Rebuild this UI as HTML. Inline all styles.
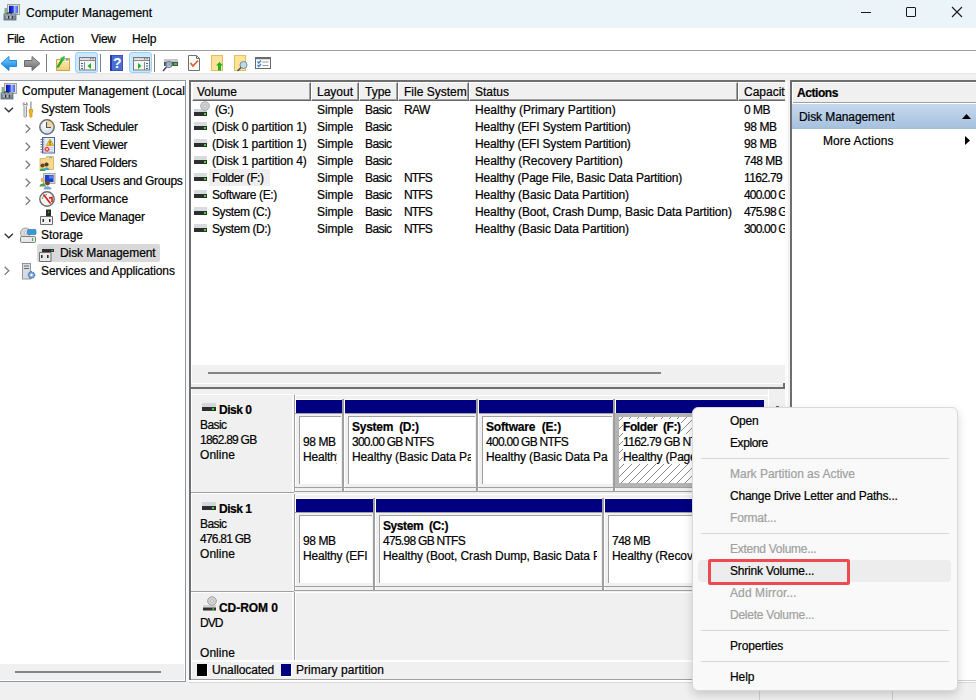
<!DOCTYPE html>
<html><head><meta charset="utf-8"><style>
*{box-sizing:border-box;margin:0;padding:0}
html,body{width:976px;height:700px;overflow:hidden;background:#f0f0f0;font-family:"Liberation Sans",sans-serif;font-size:12px;color:#000;position:relative}
.a{position:absolute}
.t{position:absolute;white-space:nowrap;line-height:14px;-webkit-text-stroke:0.2px currentColor}
.b{font-weight:bold}
svg{position:absolute;overflow:visible}
</style></head><body>
<div class="a" style="left:0px;top:0px;width:976px;height:28px;background:#ebf4f8"></div>
<div class="t" style="left:26px;top:6px;">Computer Management</div>
<svg style="left:3px;top:3px" width="18" height="18" viewBox="0 0 18 18">
<defs><linearGradient id="scr" x1="0" y1="0" x2="1" y2="0"><stop offset="0" stop-color="#0010c0"/><stop offset="0.45" stop-color="#2040e0"/><stop offset="0.6" stop-color="#a0b8ff"/><stop offset="1" stop-color="#4060f0"/></linearGradient></defs>
<rect x="4.5" y="1.5" width="12" height="10" fill="#e4e0d0" stroke="#a8a490" stroke-width="1"/>
<rect x="6" y="2.8" width="9" height="7.4" fill="url(#scr)"/>
<rect x="1.5" y="5" width="2.5" height="6" fill="#9aa0a8"/><rect x="1.8" y="7.8" width="2" height="1.6" fill="#40e040"/>
<path d="M4 10.5Q6 9 9 10.5" stroke="#202020" stroke-width="1.2" fill="none"/>
<rect x="1" y="11" width="12" height="6" fill="#7a8a98" stroke="#5a6670" stroke-width="0.8"/>
<rect x="1.5" y="11.5" width="11" height="1" fill="#a8b8c4"/>
<rect x="4.8" y="12.8" width="1.2" height="2.8" fill="#2a2a2a"/><rect x="8.6" y="12.8" width="1.2" height="2.8" fill="#2a2a2a"/>
<rect x="3.6" y="13.2" width="1" height="2" fill="#e8e8e8"/><rect x="7.4" y="13.2" width="1" height="2" fill="#e8e8e8"/>
</svg>
<div class="a" style="left:861px;top:12px;width:10px;height:1px;background:#1a1a1a"></div>
<div class="a" style="left:906px;top:7px;width:10px;height:10px;border:1px solid #1a1a1a;border-radius:1px"></div>
<svg style="left:951px;top:6px" width="12" height="12" viewBox="0 0 12 12"><path d="M1 1L11 11M11 1L1 11" stroke="#1a1a1a" stroke-width="1.1"/></svg>
<div class="a" style="left:0px;top:28px;width:976px;height:22px;background:#fff"></div>
<div class="t" style="left:7px;top:32px;letter-spacing:-0.436px;">File</div>
<div class="t" style="left:40px;top:32px;letter-spacing:0.157px;">Action</div>
<div class="t" style="left:91px;top:32px;letter-spacing:-0.274px;">View</div>
<div class="t" style="left:132px;top:32px;letter-spacing:-0.072px;">Help</div>
<div class="a" style="left:0px;top:50px;width:976px;height:1px;background:#a0a0a0"></div>
<div class="a" style="left:0px;top:51px;width:976px;height:22px;background:#fff"></div>
<div class="a" style="left:0px;top:73px;width:976px;height:1px;background:#e5e5e5"></div>
<svg style="left:0px;top:55px" width="18" height="17" viewBox="0 0 18 17">
<defs><linearGradient id="gb" x1="0" y1="0" x2="0" y2="1"><stop offset="0" stop-color="#7fd0ff"/><stop offset="1" stop-color="#0a78d8"/></linearGradient>
<linearGradient id="gg" x1="0" y1="0" x2="0" y2="1"><stop offset="0" stop-color="#b8b8b8"/><stop offset="1" stop-color="#6a6a6a"/></linearGradient></defs>
<path d="M1 8.5L9 1.5V5.5H16.5V11.5H9V15.5Z" fill="url(#gb)" stroke="#1a8ee8" stroke-width="1"/>
</svg>
<svg style="left:23px;top:55px" width="18" height="17" viewBox="0 0 18 17">
<path d="M17 8.5L9 1.5V5.5H1.5V11.5H9V15.5Z" fill="url(#gg)" stroke="#6a6a6a" stroke-width="1"/>
</svg>
<div class="a" style="left:46px;top:54px;width:1px;height:18px;background:#808080"></div>
<svg style="left:55px;top:55px" width="17" height="17" viewBox="0 0 17 17">
<defs><linearGradient id="fy" x1="0" y1="0" x2="0" y2="1"><stop offset="0" stop-color="#fdebb4"/><stop offset="1" stop-color="#f2cf78"/></linearGradient></defs>
<path d="M1.5 4.5H8L9 3.5H14.5V15.5H1.5Z" fill="url(#fy)" stroke="#c9a24c" stroke-width="1"/>
<path d="M2 6.5H14" stroke="#fff6d8" stroke-width="1"/>
<rect x="11" y="4" width="2.5" height="1.5" fill="#5aa0e8"/>
<path d="M3 11.5C4.5 9.5 5.5 7 7.5 4.5" stroke="#2aa82a" stroke-width="2.4" fill="none" stroke-linecap="round"/>
<path d="M5 3.2L9.8 0.8L9.2 6.2Z" fill="#3cc03c"/>
</svg>
<div class="a" style="left:75px;top:52px;width:23px;height:21px;background:#cce8ff;border:1px solid #99d1ff;border-radius:3px"></div>
<svg style="left:79px;top:57px" width="17" height="14" viewBox="0 0 17 14">
<rect x="0.5" y="0.5" width="16" height="12.5" fill="#f4f4f4" stroke="#7a7a7a" stroke-width="1"/>
<rect x="1" y="1" width="15" height="1.6" fill="#d8d8d8"/>
<rect x="11" y="1.3" width="1.2" height="1" fill="#505050"/><rect x="13.4" y="1.3" width="1.2" height="1" fill="#505050"/>
<rect x="1" y="3" width="15" height="1" fill="#8a8a8a"/><rect x="5" y="5" width="1" height="8" fill="#8a8a8a"/>
<rect x="2" y="6" width="2" height="1" fill="#3060b0"/><rect x="2" y="8.5" width="2" height="1" fill="#3060b0"/><rect x="2" y="11" width="2" height="1" fill="#3060b0"/>
<path d="M12 6V12L8.5 9Z" fill="#20b020"/></svg>
<div class="a" style="left:100px;top:54px;width:1px;height:18px;background:#808080"></div>
<svg style="left:110px;top:55px" width="14" height="16" viewBox="0 0 14 16">
<rect x="0" y="0" width="13" height="16" fill="#2a3a9a"/><rect x="2" y="0.5" width="10.5" height="15" fill="#4a70d8"/>
<text x="7.2" y="13" font-family="Liberation Sans" font-weight="bold" font-size="14" fill="#fff" text-anchor="middle">?</text>
</svg>
<div class="a" style="left:129px;top:52px;width:23px;height:21px;background:#cce8ff;border:1px solid #99d1ff;border-radius:3px"></div>
<svg style="left:133px;top:57px" width="17" height="14" viewBox="0 0 17 14">
<rect x="0.5" y="0.5" width="16" height="12.5" fill="#f4f4f4" stroke="#7a7a7a" stroke-width="1"/>
<rect x="1" y="1" width="15" height="1.6" fill="#d8d8d8"/>
<rect x="11" y="1.3" width="1.2" height="1" fill="#505050"/><rect x="13.4" y="1.3" width="1.2" height="1" fill="#505050"/>
<rect x="1" y="3" width="15" height="1" fill="#8a8a8a"/><rect x="11" y="5" width="1" height="8" fill="#8a8a8a"/>
<rect x="13" y="6" width="2" height="1" fill="#3060b0"/><rect x="13" y="8.5" width="2" height="1" fill="#3060b0"/><rect x="13" y="11" width="2" height="1" fill="#3060b0"/>
<path d="M5 6V12L8.5 9Z" fill="#20b020"/></svg>
<div class="a" style="left:154px;top:54px;width:1px;height:18px;background:#808080"></div>
<svg style="left:162px;top:56px" width="17" height="16" viewBox="0 0 17 16">
<rect x="2" y="3" width="14" height="3" fill="#c8c8c8"/><rect x="2" y="6" width="14" height="4" fill="#505050"/>
<rect x="12" y="7" width="3" height="2" fill="#30d030"/>
<circle cx="7" cy="8.5" r="3.2" fill="#a8c8e0" fill-opacity="0.8" stroke="#708090" stroke-width="1"/>
<path d="M4.5 11L1 15" stroke="#404850" stroke-width="1.5"/>
</svg>
<svg style="left:187px;top:55px" width="15" height="17" viewBox="0 0 15 17">
<path d="M1.5 0.5H9.5L12.5 3.5V15.5H1.5Z" fill="#fafafa" stroke="#707070" stroke-width="1"/>
<path d="M9.5 0.5V3.5H12.5" fill="none" stroke="#707070" stroke-width="1"/>
<path d="M3.5 8L6 11L11 5.5" stroke="#e05a28" stroke-width="1.6" fill="none"/>
</svg>
<svg style="left:210px;top:55px" width="15" height="17" viewBox="0 0 15 17">
<rect x="1.5" y="0.5" width="11" height="15" fill="#fde39a" stroke="#e0c060" stroke-width="1"/>
<path d="M9.5 7L6 10.5H8V15.5H11V10.5H13Z" fill="#20b020"/>
</svg>
<svg style="left:233px;top:55px" width="16" height="17" viewBox="0 0 16 17">
<rect x="1.5" y="0.5" width="11" height="15" fill="#fde39a" stroke="#e0c060" stroke-width="1"/>
<circle cx="10.5" cy="10" r="3.5" fill="#c0d8e8" stroke="#7090a0" stroke-width="1"/>
<path d="M8 12.5L4.5 16" stroke="#404850" stroke-width="1.5"/>
</svg>
<svg style="left:254px;top:56px" width="18" height="14" viewBox="0 0 18 14">
<rect x="1.5" y="1.5" width="15" height="11" fill="#fafafa" stroke="#6a6a6a" stroke-width="1"/>
<rect x="2" y="2" width="14" height="1.2" fill="#6a6a6a"/>
<path d="M3.5 5.5L4.8 7L7 4.5M3.5 9L4.8 10.5L7 8" stroke="#2a80e0" stroke-width="1.2" fill="none"/>
<rect x="8.5" y="5.5" width="6" height="1" fill="#a0a0a0"/><rect x="8.5" y="9" width="6" height="1" fill="#a0a0a0"/>
</svg>
<div class="a" style="left:0px;top:80px;width:186px;height:602px;background:#fff;border-top:1px solid #8e98a4;border-right:1px solid #8e98a4;border-bottom:1px solid #8e98a4"></div>
<div class="a" style="left:0px;top:664px;width:184px;height:16px;background:#f0f0f0"></div>
<div class="a" style="left:15px;top:671px;width:146px;height:2px;background:#858585"></div>
<div class="a" style="left:37px;top:244px;width:123px;height:18px;background:#d9d9d9;border-radius:2px"></div>
<div class="t" style="left:22px;top:84px;letter-spacing:0.035px;">Computer Management (Local</div>
<div class="t" style="left:41px;top:102px;letter-spacing:-0.178px;">System Tools</div>
<div class="t" style="left:60px;top:120px;letter-spacing:-0.318px;">Task Scheduler</div>
<div class="t" style="left:60px;top:138px;letter-spacing:-0.265px;">Event Viewer</div>
<div class="t" style="left:60px;top:156px;letter-spacing:-0.375px;">Shared Folders</div>
<div class="t" style="left:60px;top:174px;letter-spacing:-0.314px;">Local Users and Groups</div>
<div class="t" style="left:60px;top:192px;letter-spacing:-0.064px;">Performance</div>
<div class="t" style="left:60px;top:210px;letter-spacing:-0.184px;">Device Manager</div>
<div class="t" style="left:41px;top:228px;">Storage</div>
<div class="t" style="left:60px;top:246px;letter-spacing:-0.075px;">Disk Management</div>
<div class="t" style="left:41px;top:264px;letter-spacing:-0.118px;">Services and Applications</div>
<svg style="left:4px;top:107px" width="10" height="6" viewBox="0 0 10 6"><path d="M0.7 0.7L4.8 4.8L8.9 0.7" stroke="#303030" stroke-width="1.3" fill="none"/></svg>
<svg style="left:25px;top:124px" width="6" height="10" viewBox="0 0 6 10"><path d="M0.7 0.7L4.8 4.8L0.7 8.9" stroke="#7a7a7a" stroke-width="1.3" fill="none"/></svg>
<svg style="left:25px;top:142px" width="6" height="10" viewBox="0 0 6 10"><path d="M0.7 0.7L4.8 4.8L0.7 8.9" stroke="#7a7a7a" stroke-width="1.3" fill="none"/></svg>
<svg style="left:25px;top:160px" width="6" height="10" viewBox="0 0 6 10"><path d="M0.7 0.7L4.8 4.8L0.7 8.9" stroke="#7a7a7a" stroke-width="1.3" fill="none"/></svg>
<svg style="left:25px;top:178px" width="6" height="10" viewBox="0 0 6 10"><path d="M0.7 0.7L4.8 4.8L0.7 8.9" stroke="#7a7a7a" stroke-width="1.3" fill="none"/></svg>
<svg style="left:25px;top:196px" width="6" height="10" viewBox="0 0 6 10"><path d="M0.7 0.7L4.8 4.8L0.7 8.9" stroke="#7a7a7a" stroke-width="1.3" fill="none"/></svg>
<svg style="left:4px;top:233px" width="10" height="6" viewBox="0 0 10 6"><path d="M0.7 0.7L4.8 4.8L8.9 0.7" stroke="#303030" stroke-width="1.3" fill="none"/></svg>
<svg style="left:4px;top:266px" width="6" height="10" viewBox="0 0 6 10"><path d="M0.7 0.7L4.8 4.8L0.7 8.9" stroke="#7a7a7a" stroke-width="1.3" fill="none"/></svg>
<svg style="left:0px;top:82px" width="18" height="18" viewBox="0 0 18 18">
<rect x="4.5" y="1.5" width="12" height="10" fill="#e4e0d0" stroke="#a8a490" stroke-width="1"/>
<rect x="6" y="2.8" width="9" height="7.4" fill="url(#scr)"/>
<rect x="1.5" y="5" width="2.5" height="6" fill="#9aa0a8"/><rect x="1.8" y="7.8" width="2" height="1.6" fill="#40e040"/>
<path d="M4 10.5Q6 9 9 10.5" stroke="#202020" stroke-width="1.2" fill="none"/>
<rect x="1" y="11" width="12" height="6" fill="#7a8a98" stroke="#5a6670" stroke-width="0.8"/>
<rect x="1.5" y="11.5" width="11" height="1" fill="#a8b8c4"/>
<rect x="4.8" y="12.8" width="1.2" height="2.8" fill="#2a2a2a"/><rect x="8.6" y="12.8" width="1.2" height="2.8" fill="#2a2a2a"/>
<rect x="3.6" y="13.2" width="1" height="2" fill="#e8e8e8"/><rect x="7.4" y="13.2" width="1" height="2" fill="#e8e8e8"/>
</svg>
<svg style="left:22px;top:101px" width="12" height="17" viewBox="0 0 12 17">
<path d="M2 1.5C0.8 2.5 0.8 4.5 2 5.5V15.5C2 16.3 4.5 16.3 4.5 15.5V5.5C5.7 4.5 5.7 2.5 4.5 1.5V3.5H2Z" fill="#e8e8e8" stroke="#8a8a8a" stroke-width="0.9"/>
<rect x="8.3" y="0.5" width="1.2" height="8" fill="#8a8a8a"/>
<path d="M7.2 8.5H10.6V11L10 12V15.5C10 16.5 7.8 16.5 7.8 15.5V12L7.2 11Z" fill="#f2b818" stroke="#c88a10" stroke-width="0.7"/>
</svg>
<svg style="left:39px;top:119px" width="17" height="17" viewBox="0 0 17 17">
<defs><radialGradient id="cf" cx="0.4" cy="0.35" r="0.7"><stop offset="0" stop-color="#ffffff"/><stop offset="1" stop-color="#c8d8ea"/></radialGradient></defs>
<circle cx="8" cy="8" r="7.2" fill="url(#cf)" stroke="#6e6e6e" stroke-width="1.5"/>
<path d="M8 1.8V8H14.2A6.2 6.2 0 0 0 8 1.8Z" fill="#f2d494"/>
<path d="M7.5 3V8.5H12" stroke="#4a5868" stroke-width="1.1" fill="none"/>
</svg>
<svg style="left:40px;top:137px" width="15" height="17" viewBox="0 0 15 17">
<rect x="2.5" y="0.5" width="12" height="15.5" fill="#e4ecf8" stroke="#4a64a8" stroke-width="1"/>
<rect x="3" y="1" width="1.5" height="14.5" fill="#b8c8e8"/>
<path d="M0.5 2.5H3.5M0.5 5H3.5M0.5 7.5H3.5M0.5 10H3.5M0.5 12.5H3.5M0.5 15H3.5" stroke="#6a6a6a" stroke-width="1"/>
<path d="M10 10.5H13M10 12.5H13M5 14.5H13" stroke="#a8bce0" stroke-width="0.7"/>
<path d="M10 2L13.8 8.5H6.2Z" fill="#f4c420" stroke="#b88a00" stroke-width="0.6"/>
<rect x="9.6" y="4.2" width="0.9" height="2.3" fill="#3a3a3a"/><rect x="9.6" y="7" width="0.9" height="0.8" fill="#3a3a3a"/>
<circle cx="7" cy="12.3" r="2.9" fill="#e03434" stroke="#fff" stroke-width="0.6"/>
<path d="M5.8 11.1L8.2 13.5M8.2 11.1L5.8 13.5" stroke="#fff" stroke-width="0.9"/>
</svg>
<svg style="left:39px;top:155px" width="17" height="17" viewBox="0 0 17 17">
<path d="M1 3.5H6.5L7.5 1.5H14.5V14.5H1Z" fill="#f6d88a" stroke="#d0b060" stroke-width="0.8"/>
<rect x="10" y="2.2" width="3" height="1" fill="#60a0e0"/>
<path d="M0.5 16C0.5 12.5 6.5 12.5 6.5 16Z" fill="#3aa060"/><circle cx="3.5" cy="10.5" r="2.1" fill="#6a4428"/>
<path d="M4.5 15C4.5 11.5 10.5 11.5 10.5 15Z" fill="#38a8c8"/><circle cx="7.5" cy="9.5" r="2.1" fill="#5a3a20"/>
</svg>
<svg style="left:39px;top:173px" width="17" height="17" viewBox="0 0 17 17">
<rect x="4.5" y="0.5" width="11.5" height="10" fill="#d8d8d0" stroke="#9a9a90" stroke-width="0.8"/>
<rect x="6" y="2" width="8.5" height="7" fill="#1a40d8"/><rect x="10" y="2.5" width="4" height="3" fill="#5a80f0"/>
<path d="M0.5 13.5C0.5 9.5 7 9.5 7 13.5Z" fill="#5a9a48"/><circle cx="3.8" cy="7" r="2.2" fill="#d8b070"/>
<path d="M4.5 16.5C4.5 12 12.5 12 12.5 16.5Z" fill="#7aa6d6"/><circle cx="8.5" cy="10" r="2.4" fill="#6a4428"/>
</svg>
<svg style="left:39px;top:191px" width="17" height="17" viewBox="0 0 17 17">
<circle cx="8" cy="8" r="7.2" fill="#f4f4f4" stroke="#6a6a6a" stroke-width="1.4"/>
<path d="M3.5 8A4.5 4.5 0 0 1 8 3.5" stroke="#60a070" stroke-width="1" fill="none"/>
<path d="M4.5 3.5L11.5 12.5M10 7L13 6.5V11" stroke="#e01818" stroke-width="1.6" fill="none"/>
</svg>
<svg style="left:39px;top:209px" width="16" height="17" viewBox="0 0 16 17">
<rect x="7" y="0.5" width="5" height="7" fill="#2a2a2a"/><rect x="9" y="2.5" width="1.2" height="1.2" fill="#30e030"/>
<path d="M1.5 7.5H13.5V15.5H1.5Z" fill="#f0f0f0" stroke="#707070"/>
<rect x="3.5" y="10" width="1.5" height="3" fill="#303030"/><rect x="10" y="10" width="1.5" height="3" fill="#303030"/>
</svg>
<svg style="left:20px;top:227px" width="17" height="17" viewBox="0 0 17 17">
<circle cx="5.5" cy="6" r="5" fill="#d8d8d8" stroke="#909090" stroke-width="0.8"/><circle cx="5.5" cy="6" r="1.2" fill="#fff" stroke="#909090" stroke-width="0.5"/>
<rect x="7.5" y="2.5" width="8.5" height="5" rx="1" fill="#3a98d8" stroke="#2070b0" stroke-width="0.6"/>
<rect x="0.5" y="9.5" width="15" height="6" rx="1.2" fill="#e8e8e8" stroke="#808080"/>
<rect x="12" y="11" width="1.2" height="3" fill="#30c030"/>
</svg>
<svg style="left:39px;top:246px" width="16" height="16" viewBox="0 0 16 16">
<rect x="3" y="0" width="12" height="3" fill="#d0d4d8"/>
<rect x="3" y="3" width="12" height="3" fill="#303030"/><rect x="12.5" y="3.8" width="1.3" height="1.3" fill="#30e030"/>
<path d="M0.5 6.5H12V15.5H0.5Z" fill="#e8e8e8" stroke="#707070"/>
<rect x="2" y="9" width="1.6" height="3" fill="#303030"/><rect x="8" y="9" width="1.6" height="3" fill="#303030"/>
</svg>
<svg style="left:22px;top:263px" width="14" height="17" viewBox="0 0 14 17">
<rect x="0.5" y="0.5" width="8" height="15.5" fill="#d8dce0" stroke="#7a8088" stroke-width="0.8"/>
<rect x="2" y="2.5" width="5" height="1" fill="#607080"/><rect x="2" y="5" width="5" height="1" fill="#607080"/>
<circle cx="9.5" cy="12" r="3.2" fill="#7aa8d8" stroke="#4a78b0" stroke-width="1.4" stroke-dasharray="1.2 0.8"/>
<circle cx="9.5" cy="12" r="1.2" fill="#fff"/>
</svg>
<div class="a" style="left:186px;top:80px;width:3px;height:602px;background:#f7f7f7"></div>
<div class="a" style="left:189px;top:80px;width:2px;height:601px;background:#6e6e6e"></div>
<div class="a" style="left:189px;top:80px;width:596px;height:2px;background:#6e6e6e"></div>
<div class="a" style="left:191px;top:82px;width:595px;height:1px;background:#fff"></div>
<div class="a" style="left:191px;top:82px;width:1px;height:300px;background:#fff"></div>
<div class="a" style="left:192px;top:83px;width:593px;height:282px;background:#fff"></div>
<div class="a" style="left:192px;top:82px;width:593px;height:19px;overflow:hidden">
<div class="a" style="left:0px;top:0px;width:119px;height:19px;background:#f0f0f0;border-top:1px solid #fff;border-left:1px solid #fff;border-right:1px solid #696969;border-bottom:1px solid #696969;box-shadow:inset -1px -1px 0 #a0a0a0"></div>
<div class="a" style="left:119px;top:0px;width:48px;height:19px;background:#f0f0f0;border-top:1px solid #fff;border-left:1px solid #fff;border-right:1px solid #696969;border-bottom:1px solid #696969;box-shadow:inset -1px -1px 0 #a0a0a0"></div>
<div class="a" style="left:167px;top:0px;width:39px;height:19px;background:#f0f0f0;border-top:1px solid #fff;border-left:1px solid #fff;border-right:1px solid #696969;border-bottom:1px solid #696969;box-shadow:inset -1px -1px 0 #a0a0a0"></div>
<div class="a" style="left:206px;top:0px;width:71px;height:19px;background:#f0f0f0;border-top:1px solid #fff;border-left:1px solid #fff;border-right:1px solid #696969;border-bottom:1px solid #696969;box-shadow:inset -1px -1px 0 #a0a0a0"></div>
<div class="a" style="left:277px;top:0px;width:269px;height:19px;background:#f0f0f0;border-top:1px solid #fff;border-left:1px solid #fff;border-right:1px solid #696969;border-bottom:1px solid #696969;box-shadow:inset -1px -1px 0 #a0a0a0"></div>
<div class="a" style="left:546px;top:0px;width:62px;height:19px;background:#f0f0f0;border-top:1px solid #fff;border-left:1px solid #fff;border-right:1px solid #696969;border-bottom:1px solid #696969;box-shadow:inset -1px -1px 0 #a0a0a0"></div>
<div class="t" style="left:5px;top:3px">Volume</div>
<div class="t" style="left:125px;top:3px">Layout</div>
<div class="t" style="left:173px;top:3px">Type</div>
<div class="t" style="left:212px;top:3px">File System</div>
<div class="t" style="left:283px;top:3px">Status</div>
<div class="t" style="left:552px;top:3px">Capacity</div>
</div>
<div class="a" style="left:209px;top:169px;width:61px;height:17px;background:#efefef"></div>
<div class="a" style="left:192px;top:101px;width:593px;height:264px;overflow:hidden">
<div class="t" style="left:23px;top:2px;letter-spacing:-0.668px;">(G:)</div>
<div class="t" style="left:125px;top:2px;letter-spacing:-0.115px;">Simple</div>
<div class="t" style="left:173px;top:2px;letter-spacing:-0.569px;">Basic</div>
<div class="t" style="left:212px;top:2px;letter-spacing:-0.654px;">RAW</div>
<div class="t" style="left:283px;top:2px;letter-spacing:-0.000px;">Healthy (Primary Partition)</div>
<div class="t" style="left:552px;top:2px;letter-spacing:-0.504px;">0 MB</div>
<svg style="left:2px;top:0px" width="15" height="16" viewBox="0 0 15 16">
<rect x="0" y="8" width="13" height="3" fill="#d0d4d8"/>
<rect x="0" y="11" width="13" height="4" fill="#303030"/><rect x="10" y="12" width="2" height="2" fill="#30e030"/>
<circle cx="11" cy="5" r="4.3" fill="#d0d0d0" stroke="#a8a8a8" stroke-width="1"/><circle cx="11" cy="5" r="1.4" fill="#fff" stroke="#909090" stroke-width="0.6"/>
</svg>
<div class="t" style="left:20px;top:19px;letter-spacing:-0.139px;">(Disk 0 partition 1)</div>
<div class="t" style="left:125px;top:19px;letter-spacing:-0.115px;">Simple</div>
<div class="t" style="left:173px;top:19px;letter-spacing:-0.569px;">Basic</div>
<div class="t" style="left:283px;top:19px;letter-spacing:-0.190px;">Healthy (EFI System Partition)</div>
<div class="t" style="left:552px;top:19px;letter-spacing:-0.417px;">98 MB</div>
<svg style="left:2px;top:17px" width="15" height="16" viewBox="0 0 15 16">
<rect x="0" y="4" width="13" height="4" fill="#d8dcdf"/>
<rect x="0" y="8" width="13" height="4" fill="#2e2e2e"/><rect x="10" y="9" width="2" height="2" fill="#30e030"/>
</svg>
<div class="t" style="left:20px;top:36px;letter-spacing:-0.139px;">(Disk 1 partition 1)</div>
<div class="t" style="left:125px;top:36px;letter-spacing:-0.115px;">Simple</div>
<div class="t" style="left:173px;top:36px;letter-spacing:-0.569px;">Basic</div>
<div class="t" style="left:283px;top:36px;letter-spacing:-0.190px;">Healthy (EFI System Partition)</div>
<div class="t" style="left:552px;top:36px;letter-spacing:-0.417px;">98 MB</div>
<svg style="left:2px;top:34px" width="15" height="16" viewBox="0 0 15 16">
<rect x="0" y="4" width="13" height="4" fill="#d8dcdf"/>
<rect x="0" y="8" width="13" height="4" fill="#2e2e2e"/><rect x="10" y="9" width="2" height="2" fill="#30e030"/>
</svg>
<div class="t" style="left:20px;top:53px;letter-spacing:-0.139px;">(Disk 1 partition 4)</div>
<div class="t" style="left:125px;top:53px;letter-spacing:-0.115px;">Simple</div>
<div class="t" style="left:173px;top:53px;letter-spacing:-0.569px;">Basic</div>
<div class="t" style="left:283px;top:53px;letter-spacing:-0.084px;">Healthy (Recovery Partition)</div>
<div class="t" style="left:552px;top:53px;letter-spacing:-0.527px;">748 MB</div>
<svg style="left:2px;top:51px" width="15" height="16" viewBox="0 0 15 16">
<rect x="0" y="4" width="13" height="4" fill="#d8dcdf"/>
<rect x="0" y="8" width="13" height="4" fill="#2e2e2e"/><rect x="10" y="9" width="2" height="2" fill="#30e030"/>
</svg>
<div class="t" style="left:20px;top:70px;letter-spacing:-0.401px;">Folder (F:)</div>
<div class="t" style="left:125px;top:70px;letter-spacing:-0.115px;">Simple</div>
<div class="t" style="left:173px;top:70px;letter-spacing:-0.569px;">Basic</div>
<div class="t" style="left:212px;top:70px;letter-spacing:-0.836px;">NTFS</div>
<div class="t" style="left:283px;top:70px;letter-spacing:-0.189px;">Healthy (Page File, Basic Data Partition)</div>
<div class="t" style="left:552px;top:70px;letter-spacing:-0.617px;">1162.79 GB</div>
<svg style="left:2px;top:68px" width="15" height="16" viewBox="0 0 15 16">
<rect x="0" y="4" width="13" height="4" fill="#d8dcdf"/>
<rect x="0" y="8" width="13" height="4" fill="#2e2e2e"/><rect x="10" y="9" width="2" height="2" fill="#30e030"/>
</svg>
<div class="t" style="left:20px;top:87px;letter-spacing:-0.402px;">Software (E:)</div>
<div class="t" style="left:125px;top:87px;letter-spacing:-0.115px;">Simple</div>
<div class="t" style="left:173px;top:87px;letter-spacing:-0.569px;">Basic</div>
<div class="t" style="left:212px;top:87px;letter-spacing:-0.836px;">NTFS</div>
<div class="t" style="left:283px;top:87px;letter-spacing:-0.114px;">Healthy (Basic Data Partition)</div>
<div class="t" style="left:552px;top:87px;letter-spacing:-0.819px;">400.00 GB</div>
<svg style="left:2px;top:85px" width="15" height="16" viewBox="0 0 15 16">
<rect x="0" y="4" width="13" height="4" fill="#d8dcdf"/>
<rect x="0" y="8" width="13" height="4" fill="#2e2e2e"/><rect x="10" y="9" width="2" height="2" fill="#30e030"/>
</svg>
<div class="t" style="left:20px;top:104px;letter-spacing:-0.422px;">System (C:)</div>
<div class="t" style="left:125px;top:104px;letter-spacing:-0.115px;">Simple</div>
<div class="t" style="left:173px;top:104px;letter-spacing:-0.569px;">Basic</div>
<div class="t" style="left:212px;top:104px;letter-spacing:-0.836px;">NTFS</div>
<div class="t" style="left:283px;top:104px;letter-spacing:-0.125px;">Healthy (Boot, Crash Dump, Basic Data Partition)</div>
<div class="t" style="left:552px;top:104px;letter-spacing:-0.819px;">475.98 GB</div>
<svg style="left:2px;top:102px" width="15" height="16" viewBox="0 0 15 16">
<rect x="0" y="4" width="13" height="4" fill="#d8dcdf"/>
<rect x="0" y="8" width="13" height="4" fill="#2e2e2e"/><rect x="10" y="9" width="2" height="2" fill="#30e030"/>
</svg>
<div class="t" style="left:20px;top:121px;letter-spacing:-0.422px;">System (D:)</div>
<div class="t" style="left:125px;top:121px;letter-spacing:-0.115px;">Simple</div>
<div class="t" style="left:173px;top:121px;letter-spacing:-0.569px;">Basic</div>
<div class="t" style="left:212px;top:121px;letter-spacing:-0.836px;">NTFS</div>
<div class="t" style="left:283px;top:121px;letter-spacing:-0.114px;">Healthy (Basic Data Partition)</div>
<div class="t" style="left:552px;top:121px;letter-spacing:-0.819px;">300.00 GB</div>
<svg style="left:2px;top:119px" width="15" height="16" viewBox="0 0 15 16">
<rect x="0" y="4" width="13" height="4" fill="#d8dcdf"/>
<rect x="0" y="8" width="13" height="4" fill="#2e2e2e"/><rect x="10" y="9" width="2" height="2" fill="#30e030"/>
</svg>
</div>
<div class="a" style="left:192px;top:365px;width:593px;height:18px;background:#f0f0f0"></div>
<div class="a" style="left:208px;top:372px;width:453px;height:2px;background:#858585"></div>
<div class="a" style="left:191px;top:383px;width:592px;height:1px;background:#fff"></div>
<div class="a" style="left:191px;top:384px;width:592px;height:3px;background:#ececec"></div>
<div class="a" style="left:191px;top:387px;width:594px;height:2px;background:#6e6e6e"></div>
<div class="a" style="left:783px;top:383px;width:2px;height:5px;background:#6e6e6e"></div>
<div class="a" style="left:191px;top:389px;width:595px;height:290px;background:#f0f0f0"></div>
<div class="a" style="left:191px;top:389px;width:1px;height:290px;background:#fff"></div>
<div class="a" style="left:189px;top:679px;width:596px;height:1px;background:#a0a0a0"></div>
<div class="a" style="left:189px;top:680px;width:596px;height:2px;background:#fff"></div>
<div class="a" style="left:189px;top:682px;width:596px;height:1px;background:#d8d8d8"></div>
<div class="a" style="left:189px;top:82px;width:2px;height:598px;background:#6e6e6e"></div>
<div class="a" style="left:768px;top:389px;width:1px;height:271px;background:#fff"></div>
<div class="a" style="left:295px;top:395px;width:473px;height:1px;background:#fff"></div>
<div class="a" style="left:192px;top:394px;width:100px;height:1px;background:#fff"></div>
<div class="a" style="left:292px;top:396px;width:2px;height:96px;background:#fafafa"></div>
<div class="a" style="left:294px;top:395px;width:1px;height:97px;background:#a0a0a0"></div>
<div class="a" style="left:295px;top:396px;width:1px;height:96px;background:#fff"></div>
<div class="a" style="left:294px;top:491px;width:474px;height:1px;background:#a0a0a0"></div>
<div class="a" style="left:191px;top:492px;width:103px;height:1px;background:#a0a0a0"></div>
<div class="a" style="left:191px;top:493px;width:103px;height:1px;background:#fff"></div>
<svg style="left:202px;top:403px" width="14" height="8" viewBox="0 0 14 8">
<rect x="0" y="0" width="14" height="4" fill="#d4d8dc"/>
<rect x="0" y="4" width="14" height="4" fill="#2e2e2e"/><rect x="10" y="5" width="2" height="2" fill="#30e030"/>
</svg>
<div class="t" style="left:219px;top:403px;letter-spacing:-0.477px;font-weight:bold">Disk 0</div>
<div class="t" style="left:200px;top:418px;letter-spacing:-0.569px;">Basic</div>
<div class="t" style="left:200px;top:433px;letter-spacing:-0.766px;">1862.89 GB</div>
<div class="t" style="left:200px;top:448px;letter-spacing:0.052px;">Online</div>
<div class="a" style="left:296px;top:399px;width:46px;height:1px;background:#fff"></div>
<div class="a" style="left:296px;top:400px;width:46px;height:13px;background:#000080"></div>
<div class="a" style="left:294px;top:413px;width:49px;height:1px;background:#a0a0a0"></div>
<div class="a" style="left:295px;top:487px;width:48px;height:1px;background:#a0a0a0"></div>
<div class="a" style="left:299px;top:416px;width:42px;height:68px;background:#fff;border-top:1px solid #a0a0a0;border-left:1px solid #a0a0a0;overflow:hidden">
<div class="a" style="left:0;top:0;width:37px;height:67px;overflow:hidden">
<div class="t" style="left:3px;top:18px;letter-spacing:-0.417px;">98 MB</div>
<div class="t" style="left:3px;top:33px;letter-spacing:-0.190px;">Healthy (EFI System Partition)</div>
</div></div>
<div class="a" style="left:345px;top:399px;width:131px;height:1px;background:#fff"></div>
<div class="a" style="left:345px;top:400px;width:131px;height:13px;background:#000080"></div>
<div class="a" style="left:342px;top:413px;width:134px;height:1px;background:#a0a0a0"></div>
<div class="a" style="left:342px;top:399px;width:2px;height:92px;background:#a0a0a0"></div>
<div class="a" style="left:344px;top:400px;width:1px;height:91px;background:#fff"></div>
<div class="a" style="left:344px;top:487px;width:133px;height:1px;background:#a0a0a0"></div>
<div class="a" style="left:348px;top:416px;width:127px;height:68px;background:#fff;border-top:1px solid #a0a0a0;border-left:1px solid #a0a0a0;overflow:hidden">
<div class="a" style="left:0;top:0;width:122px;height:67px;overflow:hidden">
<div class="t" style="left:3px;top:3px;font-weight:bold;letter-spacing:-0.276px;">System&nbsp; (D:)</div>
<div class="t" style="left:3px;top:18px;letter-spacing:-0.760px;">300.00 GB NTFS</div>
<div class="t" style="left:3px;top:33px;letter-spacing:-0.114px;">Healthy (Basic Data Partition)</div>
</div></div>
<div class="a" style="left:479px;top:399px;width:134px;height:1px;background:#fff"></div>
<div class="a" style="left:479px;top:400px;width:134px;height:13px;background:#000080"></div>
<div class="a" style="left:476px;top:413px;width:137px;height:1px;background:#a0a0a0"></div>
<div class="a" style="left:476px;top:399px;width:2px;height:92px;background:#a0a0a0"></div>
<div class="a" style="left:478px;top:400px;width:1px;height:91px;background:#fff"></div>
<div class="a" style="left:478px;top:487px;width:136px;height:1px;background:#a0a0a0"></div>
<div class="a" style="left:482px;top:416px;width:130px;height:68px;background:#fff;border-top:1px solid #a0a0a0;border-left:1px solid #a0a0a0;overflow:hidden">
<div class="a" style="left:0;top:0;width:125px;height:67px;overflow:hidden">
<div class="t" style="left:3px;top:3px;font-weight:bold;letter-spacing:-0.167px;">Software&nbsp; (E:)</div>
<div class="t" style="left:3px;top:18px;letter-spacing:-0.718px;">400.00 GB NTFS</div>
<div class="t" style="left:3px;top:33px;letter-spacing:-0.114px;">Healthy (Basic Data Partition)</div>
</div></div>
<div class="a" style="left:616px;top:399px;width:148px;height:1px;background:#fff"></div>
<div class="a" style="left:616px;top:400px;width:148px;height:13px;background:#000080"></div>
<div class="a" style="left:613px;top:413px;width:151px;height:1px;background:#a0a0a0"></div>
<div class="a" style="left:613px;top:399px;width:2px;height:92px;background:#a0a0a0"></div>
<div class="a" style="left:615px;top:400px;width:1px;height:91px;background:#fff"></div>
<div class="a" style="left:615px;top:487px;width:150px;height:1px;background:#a0a0a0"></div>
<div class="a" style="left:615px;top:413px;width:150px;height:74px;background:#b4b4b4"></div>
<div class="a" style="left:619px;top:417px;width:144px;height:66px;background:#fff;overflow:hidden">
<svg style="left:0;top:0" width="144" height="66" shape-rendering="crispEdges"><defs><pattern id="hat" width="8" height="8" patternUnits="userSpaceOnUse" x="3" y="1"><rect x="7" y="0" width="1" height="1" fill="#8c8c8c"/><rect x="6" y="1" width="1" height="1" fill="#8c8c8c"/><rect x="5" y="2" width="1" height="1" fill="#8c8c8c"/><rect x="4" y="3" width="1" height="1" fill="#8c8c8c"/><rect x="3" y="4" width="1" height="1" fill="#8c8c8c"/><rect x="2" y="5" width="1" height="1" fill="#8c8c8c"/><rect x="1" y="6" width="1" height="1" fill="#8c8c8c"/><rect x="0" y="7" width="1" height="1" fill="#8c8c8c"/></pattern></defs><rect width="144" height="66" fill="url(#hat)"/></svg>
<div class="t" style="left:4px;top:2px;padding-top:1px;font-weight:bold;letter-spacing:-0.421px;background:#fff">Folder&nbsp; (F:)</div>
<div class="t" style="left:4px;top:17px;padding-top:1px;letter-spacing:-0.629px;background:#fff">1162.79 GB NTFS</div>
<div class="t" style="left:4px;top:32px;padding-top:1px;letter-spacing:-0.189px;background:#fff">Healthy (Page File, Basic Data Partition)</div>
</div>
<div class="a" style="left:295px;top:494px;width:473px;height:1px;background:#fff"></div>
<div class="a" style="left:292px;top:495px;width:2px;height:96px;background:#fafafa"></div>
<div class="a" style="left:294px;top:494px;width:1px;height:97px;background:#a0a0a0"></div>
<div class="a" style="left:295px;top:495px;width:1px;height:96px;background:#fff"></div>
<div class="a" style="left:294px;top:590px;width:474px;height:1px;background:#a0a0a0"></div>
<div class="a" style="left:191px;top:591px;width:103px;height:1px;background:#a0a0a0"></div>
<div class="a" style="left:191px;top:592px;width:103px;height:1px;background:#fff"></div>
<svg style="left:202px;top:502px" width="14" height="8" viewBox="0 0 14 8">
<rect x="0" y="0" width="14" height="4" fill="#d4d8dc"/>
<rect x="0" y="4" width="14" height="4" fill="#2e2e2e"/><rect x="10" y="5" width="2" height="2" fill="#30e030"/>
</svg>
<div class="t" style="left:219px;top:502px;letter-spacing:-0.493px;font-weight:bold">Disk 1</div>
<div class="t" style="left:200px;top:517px;letter-spacing:-0.569px;">Basic</div>
<div class="t" style="left:200px;top:532px;letter-spacing:-0.764px;">476.81 GB</div>
<div class="t" style="left:200px;top:547px;letter-spacing:0.052px;">Online</div>
<div class="a" style="left:296px;top:498px;width:77px;height:1px;background:#fff"></div>
<div class="a" style="left:296px;top:499px;width:77px;height:13px;background:#000080"></div>
<div class="a" style="left:294px;top:512px;width:80px;height:1px;background:#a0a0a0"></div>
<div class="a" style="left:295px;top:586px;width:79px;height:1px;background:#a0a0a0"></div>
<div class="a" style="left:299px;top:515px;width:73px;height:68px;background:#fff;border-top:1px solid #a0a0a0;border-left:1px solid #a0a0a0;overflow:hidden">
<div class="a" style="left:0;top:0;width:68px;height:67px;overflow:hidden">
<div class="t" style="left:3px;top:18px;letter-spacing:-0.417px;">98 MB</div>
<div class="t" style="left:3px;top:33px;letter-spacing:-0.190px;">Healthy (EFI System Partition)</div>
</div></div>
<div class="a" style="left:376px;top:498px;width:226px;height:1px;background:#fff"></div>
<div class="a" style="left:376px;top:499px;width:226px;height:13px;background:#000080"></div>
<div class="a" style="left:373px;top:512px;width:229px;height:1px;background:#a0a0a0"></div>
<div class="a" style="left:373px;top:498px;width:2px;height:92px;background:#a0a0a0"></div>
<div class="a" style="left:375px;top:499px;width:1px;height:91px;background:#fff"></div>
<div class="a" style="left:375px;top:586px;width:228px;height:1px;background:#a0a0a0"></div>
<div class="a" style="left:379px;top:515px;width:222px;height:68px;background:#fff;border-top:1px solid #a0a0a0;border-left:1px solid #a0a0a0;overflow:hidden">
<div class="a" style="left:0;top:0;width:217px;height:67px;overflow:hidden">
<div class="t" style="left:3px;top:3px;font-weight:bold;letter-spacing:-0.418px;">System&nbsp; (C:)</div>
<div class="t" style="left:3px;top:18px;letter-spacing:-0.718px;">475.98 GB NTFS</div>
<div class="t" style="left:3px;top:33px;letter-spacing:-0.125px;">Healthy (Boot, Crash Dump, Basic Data Partition)</div>
</div></div>
<div class="a" style="left:605px;top:498px;width:159px;height:1px;background:#fff"></div>
<div class="a" style="left:605px;top:499px;width:159px;height:13px;background:#000080"></div>
<div class="a" style="left:602px;top:512px;width:162px;height:1px;background:#a0a0a0"></div>
<div class="a" style="left:602px;top:498px;width:2px;height:92px;background:#a0a0a0"></div>
<div class="a" style="left:604px;top:499px;width:1px;height:91px;background:#fff"></div>
<div class="a" style="left:604px;top:586px;width:161px;height:1px;background:#a0a0a0"></div>
<div class="a" style="left:608px;top:515px;width:155px;height:68px;background:#fff;border-top:1px solid #a0a0a0;border-left:1px solid #a0a0a0;overflow:hidden">
<div class="a" style="left:0;top:0;width:150px;height:67px;overflow:hidden">
<div class="t" style="left:3px;top:18px;letter-spacing:-0.527px;">748 MB</div>
<div class="t" style="left:3px;top:33px;letter-spacing:-0.084px;">Healthy (Recovery Partition)</div>
</div></div>
<div class="a" style="left:192px;top:592px;width:576px;height:1px;background:#fff"></div>
<div class="a" style="left:292px;top:593px;width:2px;height:67px;background:#fafafa"></div>
<div class="a" style="left:294px;top:592px;width:1px;height:68px;background:#a0a0a0"></div>
<div class="a" style="left:295px;top:593px;width:1px;height:67px;background:#fff"></div>
<svg style="left:202px;top:596px" width="16" height="16" viewBox="0 0 16 16">
<rect x="1" y="9" width="13" height="2.5" fill="#d0d4d8"/>
<rect x="1" y="11.5" width="13" height="3" fill="#303030"/><rect x="10.5" y="12.2" width="1.6" height="1.6" fill="#30e030"/>
<circle cx="10" cy="5" r="4.3" fill="#d4d4d4" stroke="#a0a0a0" stroke-width="1"/><circle cx="10" cy="5" r="1.4" fill="#fff" stroke="#909090" stroke-width="0.6"/>
</svg>
<div class="t" style="left:219px;top:601px;letter-spacing:-0.043px;font-weight:bold">CD-ROM 0</div>
<div class="t" style="left:200px;top:616px;letter-spacing:-0.948px;">DVD</div>
<div class="t" style="left:200px;top:646px;letter-spacing:0.052px;">Online</div>
<div class="a" style="left:191px;top:660px;width:595px;height:2px;background:#fff"></div>
<div class="a" style="left:192px;top:662px;width:594px;height:17px;background:#f0f0f0"></div>
<div class="a" style="left:197px;top:664px;width:10px;height:12px;background:#000;box-shadow:1px 1px 0 #fff"></div>
<div class="t" style="left:212px;top:663px;letter-spacing:-0.125px;">Unallocated</div>
<div class="a" style="left:281px;top:664px;width:10px;height:12px;background:#000080;box-shadow:1px 1px 0 #fff"></div>
<div class="t" style="left:296px;top:663px;letter-spacing:0.038px;">Primary partition</div>
<div class="a" style="left:776px;top:406px;width:3px;height:1px;background:#606060"></div>
<div class="a" style="left:785px;top:82px;width:3px;height:600px;background:#fbfbfb"></div>
<div class="a" style="left:788px;top:82px;width:2px;height:600px;background:#f0f0f0"></div>
<div class="a" style="left:790px;top:80px;width:186px;height:2px;background:#6e6e6e"></div>
<div class="a" style="left:790px;top:80px;width:2px;height:601px;background:#6e6e6e"></div>
<div class="a" style="left:792px;top:82px;width:184px;height:598px;background:#fff"></div>
<div class="a" style="left:793px;top:83px;width:183px;height:19px;background:#f0f0f0"></div>
<div class="a" style="left:793px;top:102px;width:183px;height:1px;background:#a0a0a0"></div>
<div class="a" style="left:792px;top:104px;width:184px;height:25px;background:linear-gradient(#c6daef,#a4bfdd)"></div>
<div class="t" style="left:797px;top:86px;letter-spacing:-0.431px;font-weight:bold">Actions</div>
<div class="t" style="left:799px;top:110px;letter-spacing:-0.088px;">Disk Management</div>
<svg style="left:961px;top:113px" width="12" height="7" viewBox="0 0 12 7"><path d="M1 6L5.5 1L10 6Z" fill="#000"/></svg>
<div class="t" style="left:823px;top:134px;letter-spacing:0.102px;">More Actions</div>
<svg style="left:964px;top:135px" width="8" height="11" viewBox="0 0 8 11"><path d="M1 1L6 5.5L1 10Z" fill="#000"/></svg>
<div class="a" style="left:790px;top:680px;width:186px;height:1px;background:#cfcfcf"></div>
<div class="a" style="left:790px;top:681px;width:186px;height:1px;background:#fff"></div>
<div class="a" style="left:790px;top:682px;width:186px;height:1px;background:#d8d8d8"></div>
<div class="a" style="left:759px;top:684px;width:1px;height:16px;background:#d0d0d0"></div>
<div class="a" style="left:892px;top:684px;width:1px;height:16px;background:#d0d0d0"></div>
<div class="a" style="left:692px;top:407px;width:266px;height:284px;background:#f9f9f9;border:1px solid #d9d9d9;border-radius:6px;box-shadow:0 4px 10px rgba(0,0,0,0.16)"></div>
<div class="a" style="left:701px;top:458px;width:248px;height:1px;background:#d6d6d6"></div>
<div class="a" style="left:701px;top:533px;width:248px;height:1px;background:#d6d6d6"></div>
<div class="a" style="left:701px;top:630px;width:248px;height:1px;background:#d6d6d6"></div>
<div class="a" style="left:701px;top:661px;width:248px;height:1px;background:#d6d6d6"></div>
<div class="a" style="left:698px;top:560px;width:253px;height:22px;background:#ededed;border-radius:4px"></div>
<div class="t" style="left:730px;top:414px;letter-spacing:-0.240px;">Open</div>
<div class="t" style="left:730px;top:436px;letter-spacing:-0.413px;">Explore</div>
<div class="t" style="left:730px;top:467px;letter-spacing:-0.016px;color:#a0a0a0">Mark Partition as Active</div>
<div class="t" style="left:730px;top:489px;letter-spacing:-0.224px;">Change Drive Letter and Paths...</div>
<div class="t" style="left:730px;top:511px;letter-spacing:-0.180px;color:#a0a0a0">Format...</div>
<div class="t" style="left:730px;top:542px;letter-spacing:-0.271px;color:#a0a0a0">Extend Volume...</div>
<div class="t" style="left:730px;top:564px;letter-spacing:-0.198px;">Shrink Volume...</div>
<div class="t" style="left:730px;top:586px;letter-spacing:0.103px;color:#a0a0a0">Add Mirror...</div>
<div class="t" style="left:730px;top:608px;letter-spacing:-0.241px;color:#a0a0a0">Delete Volume...</div>
<div class="t" style="left:730px;top:639px;letter-spacing:-0.170px;">Properties</div>
<div class="t" style="left:730px;top:670px;letter-spacing:-0.072px;">Help</div>
<div class="a" style="left:708px;top:559px;width:142px;height:26px;border:3px solid #ee4a52;border-radius:2px"></div>
</body></html>
